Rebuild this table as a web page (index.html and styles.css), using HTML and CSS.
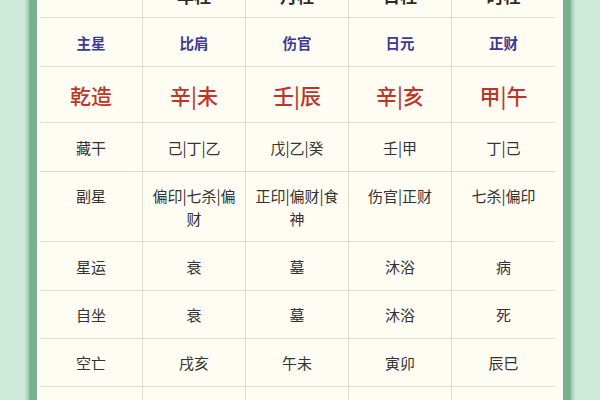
FILE: index.html
```html
<!DOCTYPE html>
<html lang="zh">
<head>
<meta charset="utf-8">
<link rel="stylesheet" href="styles.css">
</head>
<body>
<div class="frame">
  <div class="grid">
    <div class="cell head"></div>
    <div class="cell head">年柱</div>
    <div class="cell head">月柱</div>
    <div class="cell head">日柱</div>
    <div class="cell head last">时柱</div>

    <div class="cell star">主星</div>
    <div class="cell star">比肩</div>
    <div class="cell star">伤官</div>
    <div class="cell star">日元</div>
    <div class="cell star last">正财</div>

    <div class="cell gz">乾造</div>
    <div class="cell gz">辛|未</div>
    <div class="cell gz">壬|辰</div>
    <div class="cell gz">辛|亥</div>
    <div class="cell gz last">甲|午</div>

    <div class="cell norm">藏干</div>
    <div class="cell norm">己|丁|乙</div>
    <div class="cell norm">戊|乙|癸</div>
    <div class="cell norm">壬|甲</div>
    <div class="cell norm last">丁|己</div>

    <div class="cell tall">副星</div>
    <div class="cell tall">偏印|七杀|偏财</div>
    <div class="cell tall">正印|偏财|食神</div>
    <div class="cell tall">伤官|正财</div>
    <div class="cell tall last">七杀|偏印</div>

    <div class="cell norm">星运</div>
    <div class="cell norm">衰</div>
    <div class="cell norm">墓</div>
    <div class="cell norm">沐浴</div>
    <div class="cell norm last">病</div>

    <div class="cell norm r48">自坐</div>
    <div class="cell norm r48">衰</div>
    <div class="cell norm r48">墓</div>
    <div class="cell norm r48">沐浴</div>
    <div class="cell norm r48 last">死</div>

    <div class="cell norm r48">空亡</div>
    <div class="cell norm r48">戌亥</div>
    <div class="cell norm r48">午未</div>
    <div class="cell norm r48">寅卯</div>
    <div class="cell norm r48 last">辰巳</div>

    <div class="cell norm"></div>
    <div class="cell norm"></div>
    <div class="cell norm"></div>
    <div class="cell norm"></div>
    <div class="cell norm last"></div>
  </div>
</div>
</body>
</html>
```
FILE: styles.css
```css
html, body {
  margin: 0;
  padding: 0;
  background: #cdeada;
  overflow: hidden;
  height: 400px;
}
body {
  font-family: "Noto Sans CJK SC", "Noto Sans", sans-serif;
}
.frame {
  margin: -27px 0 0 29px;
  width: 519px;
  padding: 0 4px 0 3px;
  background: #fffdf3;
  border-left: 8px solid #79b18c;
  border-right: 8px solid #79b18c;
  box-shadow: -3px 0 2px #a8d3b6, 3px 0 2px #a8d3b6;
}
.grid {
  display: grid;
  grid-template-columns: repeat(5, 103px);
}
.cell {
  border-right: 1px solid #e0ddc9;
  border-bottom: 1.5px solid #e0ddc9;
  display: flex;
  align-items: center;
  justify-content: center;
  text-align: center;
  box-sizing: border-box;
  color: #333;
  font-size: 15px;
}
.cell.last {
  border-right: none;
}
.head {
  height: 45px;
  font-size: 17px;
  font-weight: 700;
  color: #2a2a2a;
}
.star {
  height: 49px;
  color: #3a3a96;
  font-weight: 700;
  font-size: 14.5px;
}
.gz {
  height: 56px;
  color: #bd3529;
  font-size: 21px;
  font-weight: 500;
}
.norm {
  height: 49px;
}
.r48 {
  height: 48px;
}
.tall {
  height: 70px;
  align-items: flex-start;
  padding: 12px 7px 0;
  line-height: 23px;
}
```
